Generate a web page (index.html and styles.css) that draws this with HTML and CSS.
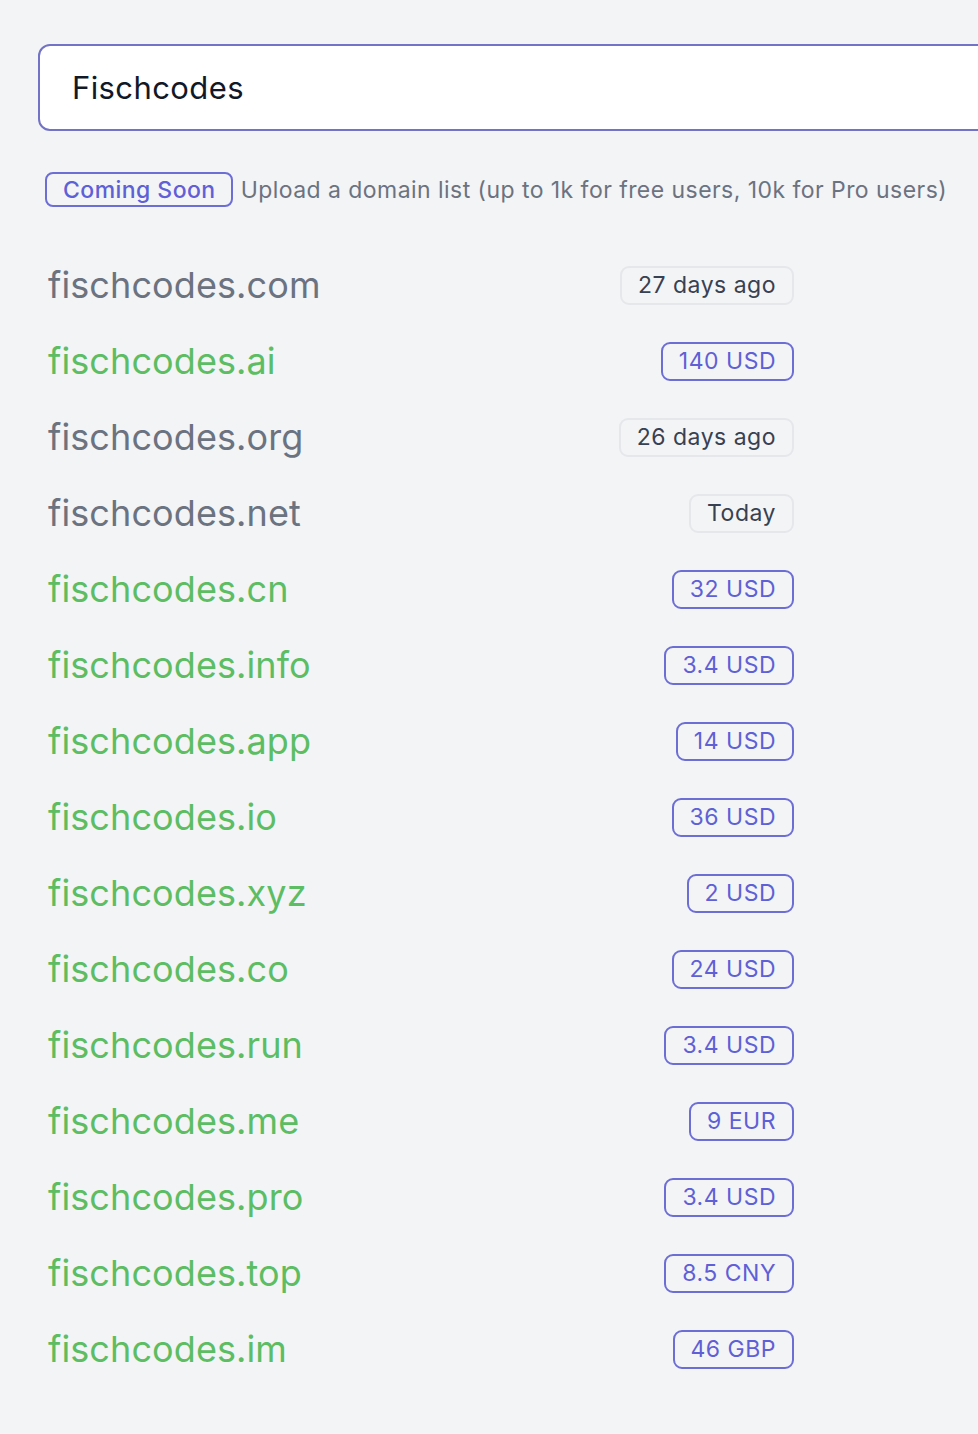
FILE: index.html
```html
<!DOCTYPE html>
<html>
<head>
<meta charset="utf-8">
<link rel="stylesheet" href="styles.css">
</head>
<body>
<div class="page">
  <div class="search">
    <div class="search-input">Fischcodes</div>
  </div>
  <div class="notice">
    <span class="soon">Coming Soon</span>
    <span class="notice-text">Upload a domain list (up to 1k for free users, 10k for Pro users)</span>
  </div>
  <ul class="list">
    <li class="row"><span class="domain taken">fischcodes.com</span><span class="badge gray">27 days ago</span></li>
    <li class="row"><span class="domain free">fischcodes.ai</span><span class="badge price">140 USD</span></li>
    <li class="row"><span class="domain taken">fischcodes.org</span><span class="badge gray">26 days ago</span></li>
    <li class="row"><span class="domain taken">fischcodes.net</span><span class="badge gray">Today</span></li>
    <li class="row"><span class="domain free">fischcodes.cn</span><span class="badge price">32 USD</span></li>
    <li class="row"><span class="domain free">fischcodes.info</span><span class="badge price">3.4 USD</span></li>
    <li class="row"><span class="domain free">fischcodes.app</span><span class="badge price">14 USD</span></li>
    <li class="row"><span class="domain free">fischcodes.io</span><span class="badge price">36 USD</span></li>
    <li class="row"><span class="domain free">fischcodes.xyz</span><span class="badge price">2 USD</span></li>
    <li class="row"><span class="domain free">fischcodes.co</span><span class="badge price">24 USD</span></li>
    <li class="row"><span class="domain free">fischcodes.run</span><span class="badge price">3.4 USD</span></li>
    <li class="row"><span class="domain free">fischcodes.me</span><span class="badge price">9 EUR</span></li>
    <li class="row"><span class="domain free">fischcodes.pro</span><span class="badge price">3.4 USD</span></li>
    <li class="row"><span class="domain free">fischcodes.top</span><span class="badge price">8.5 CNY</span></li>
    <li class="row"><span class="domain free">fischcodes.im</span><span class="badge price">46 GBP</span></li>
  </ul>
</div>
</body>
</html>
```

FILE: styles.css
```css
html, body {
  margin: 0;
  padding: 0;
  background: #f3f4f6;
  overflow: hidden;
}
body {
  font-family: Inter, "Noto Sans", sans-serif;
  height: 1434px;
}
.page {
  padding: 44px 0 0 38px;
}
.search {
  width: 1000px;
}
.search-input {
  box-sizing: border-box;
  height: 87px;
  border: 2px solid #7272c6;
  border-radius: 12px;
  background: #ffffff;
  padding: 0 0 0 32px;
  display: flex;
  align-items: center;
  font-size: 31px;
  letter-spacing: 0.4px;
  color: #111827;
}
.notice {
  display: flex;
  align-items: center;
  margin: 41px 0 0 7px;
  font-size: 23px;
  letter-spacing: 0.45px;
}
.soon {
  box-sizing: border-box;
  height: 35px;
  display: inline-flex;
  align-items: center;
  padding: 0 15px 0 16px;
  border: 2px solid #6d6dd6;
  border-radius: 8px;
  color: #5f5fd6;
  font-weight: 500;
}
.notice-text {
  margin-left: 8px;
  color: #6b7280;
}
.list {
  list-style: none;
  margin: 40px 0 0 10px;
  padding: 0;
  width: 746px;
}
.row {
  display: flex;
  align-items: center;
  justify-content: space-between;
  height: 76px;
}
.domain {
  font-size: 36px;
  letter-spacing: 0.1px;
}
.taken {
  color: #6b7280;
}
.free {
  color: #5cbd62;
}
.badge {
  box-sizing: border-box;
  height: 39px;
  display: inline-flex;
  align-items: center;
  padding: 0 16px;
  border-radius: 9px;
  font-size: 23px;
  letter-spacing: 0.5px;
}
.gray {
  border: 2px solid #e5e7eb;
  color: #374151;
  background: #f3f4f6;
}
.price {
  border: 2px solid #6d6dd6;
  color: #5f5fd6;
}
```
